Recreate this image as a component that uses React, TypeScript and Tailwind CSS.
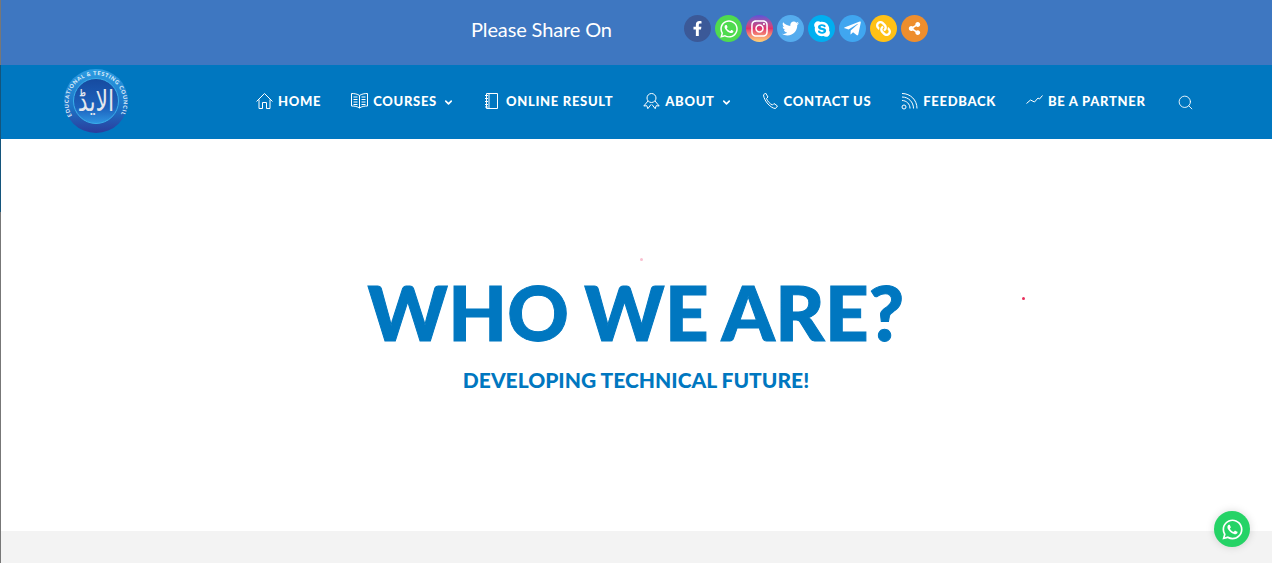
import { ChevronDown, Search } from "lucide-react";
import { FaFacebookF, FaWhatsapp, FaInstagram, FaTwitter, FaSkype, FaTelegramPlane, FaLink, FaShareAlt } from "react-icons/fa";
import { ReactNode } from "react";

const lato = { fontFamily: "Lato, sans-serif" };

const socials = [
  { icon: <FaFacebookF size={15} />, bg: "bg-[#3b5998]" },
  { icon: <FaWhatsapp size={20} />, bg: "bg-[#4fdb4f]" },
  { icon: <FaInstagram size={19} />, bg: "bg-gradient-to-t from-[#fed373] via-[#e1306c] to-[#5b51d8]" },
  { icon: <FaTwitter size={17} />, bg: "bg-[#55acee]" },
  { icon: <FaSkype size={18} />, bg: "bg-[#00aff0]" },
  { icon: <FaTelegramPlane size={19} />, bg: "bg-[#40a6f0]" },
  { icon: <FaLink size={15} className="-scale-x-100" />, bg: "bg-[#ffc116]" },
  { icon: <FaShareAlt size={13} />, bg: "bg-[#ee8e2d]" },
];

const svgProps = {
  width: 17,
  height: 18,
  viewBox: "0 0 17 18",
  fill: "none",
  stroke: "currentColor",
  strokeWidth: 1,
};

const HomeIcon = () => (
  <svg {...svgProps}>
    <path d="M.5 9.500 8.500 1.500l8 8M3 7.500v9h3.500v-6h4v6H14v-9" />
  </svg>
);
const BookIcon = () => (
  <svg {...svgProps}>
    <path d="M8.500 3.500C6.500 2 3.500 1.500.5 1.500v12.500c3 0 6 .5 8 2 2-1.500 5-2 8-2V1.500c-3 0-6 .5-8 2V16M2.500 5h4M2.500 7.500h4M2.500 10h4M2.500 12.500h4M10.500 5h4M10.500 7.500h4M10.500 10h4M10.500 12.500h4" />
  </svg>
);
const NotebookIcon = () => (
  <svg {...svgProps}>
    <path d="M2.500 1.500h11v15h-11zM5 1.500v15M1 3.500h3M1 6.500h3M1 9.500h3M1 12.500h3M1 15h3" />
  </svg>
);
const RibbonIcon = () => (
  <svg {...svgProps}>
    <circle cx="8.500" cy="6" r="4.500" />
    <path d="M5 9 .8 14l3-.3 1 3L8 12.500M12 9l4.200 5-3-.3-1 3L9 12.500" />
  </svg>
);
const PhoneIcon = () => (
  <svg {...svgProps}>
    <path d="M1.500 3 3.500 1 6 5 4.500 6.500c.8 2.500 3.500 5.500 6 6.500L12 11.500l3.500 2.500-2 2.500C9 16.500 2 9 1.500 3Z" />
  </svg>
);
const RssIcon = () => (
  <svg {...svgProps}>
    <circle cx="3" cy="15" r="2" />
    <path d="M1 8.500c4.500 0 8 3.500 8 8M1 5c6.500 0 11.500 5 11.500 11.500M1 1.500c8.500 0 15 6.500 15 15" />
  </svg>
);
const TrendIcon = () => (
  <svg {...svgProps}>
    <path d="M.5 11.500 4.500 8l4 2 3.500-4 1.500 1 3-3.500" />
  </svg>
);

const NavItem = ({ icon, label, caret }: { icon: ReactNode; label: string; caret?: boolean }) => (
  <a className="flex items-center text-white">
    <span className="mr-[5px] -mt-[3px]">{icon}</span>
    <span className="text-[13px] font-black tracking-[0.7px]">{label}</span>
    {caret && <ChevronDown size={11} strokeWidth={3.5} className="ml-[6px]" />}
  </a>
);

export default function App() {
  return (
    <div className="relative flex h-[563px] w-full overflow-hidden bg-white" style={lato}>
      <div className="flex w-px flex-col bg-[#777777]">
        <div className="h-[65px]" />
        <div className="h-[147px] bg-[#14557c]" />
      </div>
      <div className="flex min-w-0 flex-1 flex-col">
        <div className="flex h-[65px] items-center bg-[#3e77c1] pb-[8px]">
          <span className="ml-[470px] w-[213px] text-[20px] tracking-[-0.13px] text-white">Please Share On</span>
          <div className="flex gap-[4px]">
            {socials.map((s, i) => (
              <div key={i} className={"flex h-[27px] w-[27px] items-center justify-center rounded-full text-white " + s.bg}>
                {s.icon}
              </div>
            ))}
          </div>
        </div>
        <div className="flex h-[74px] items-center bg-[#0077c0] pl-[62px]">
          <svg width="66" height="66" viewBox="0 0 66 66" className="-mt-[2px]">
            <defs>
              <linearGradient id="logo-outer" x1="0" y1="0" x2="0" y2="1">
                <stop offset="0" stopColor="#2c9ce2" />
                <stop offset="0.6" stopColor="#1c74c6" />
                <stop offset="1" stopColor="#2b3c9c" />
              </linearGradient>
              <linearGradient id="logo-inner" x1="0" y1="0" x2="0" y2="1">
                <stop offset="0" stopColor="#164a9f" />
                <stop offset="0.65" stopColor="#1d62bd" />
                <stop offset="1" stopColor="#2f95e2" />
              </linearGradient>
            </defs>
            <circle cx="33" cy="33" r="32" fill="url(#logo-outer)" />
            <circle cx="33" cy="33" r="22.500" fill="url(#logo-inner)" stroke="#39b0ea" strokeWidth="1" />
            <path id="logo-ring" d="M9 48a27.500 27.500 0 1 1 48 0" fill="none" />
            <text fontSize="5.500" fontWeight="900" fill="#dcecf8" fontFamily="Lato, sans-serif">
              <textPath href="#logo-ring" textLength="112">EDUCATIONAL &amp; TESTING COUNCIL</textPath>
            </text>
            <text transform="translate(33 43) scale(1 1.3)" textAnchor="middle" fontSize="22" fill="#e4e8ee" fontFamily="'DejaVu Sans', sans-serif">الایڈ</text>
          </svg>
          <nav className="ml-[127px] flex items-center gap-[30px]">
            <NavItem icon={<HomeIcon />} label="HOME" />
            <NavItem icon={<BookIcon />} label="COURSES" caret />
            <NavItem icon={<NotebookIcon />} label="ONLINE RESULT" />
            <NavItem icon={<RibbonIcon />} label="ABOUT" caret />
            <NavItem icon={<PhoneIcon />} label="CONTACT US" />
            <NavItem icon={<RssIcon />} label="FEEDBACK" />
            <NavItem icon={<TrendIcon />} label="BE A PARTNER" />
            <Search size={17} strokeWidth={1.25} className="ml-[1px] text-white" />
          </nav>
        </div>
        <main className="flex h-[392px] flex-col items-center bg-white pr-[1px] pt-[130px] text-[#0077c0]">
          <h1 className="text-[76px] font-black leading-[86px] tracking-[0.3px] [-webkit-text-stroke:1px_#0077c0] [word-spacing:-3px]">WHO WE ARE?</h1>
          <h2 className="mt-[11px] text-[21px] font-black leading-[28px]">DEVELOPING TECHNICAL FUTURE!</h2>
        </main>
        <div className="flex-1 bg-[#f3f3f3]" />
      </div>
      <span className="absolute left-[640px] top-[258px] h-[3px] w-[3px] rounded-full bg-[#f9c0d0]" />
      <span className="absolute left-[1022px] top-[297px] h-[3px] w-[3px] rounded-full bg-[#e8305c]" />
      <div className="absolute left-[1214px] top-[511px] flex h-[36px] w-[36px] items-center justify-center rounded-full bg-[#25d366] text-white shadow-[0_0_8px_rgba(0,0,0,0.15)]">
        <FaWhatsapp size={23} />
      </div>
    </div>
  );
}
